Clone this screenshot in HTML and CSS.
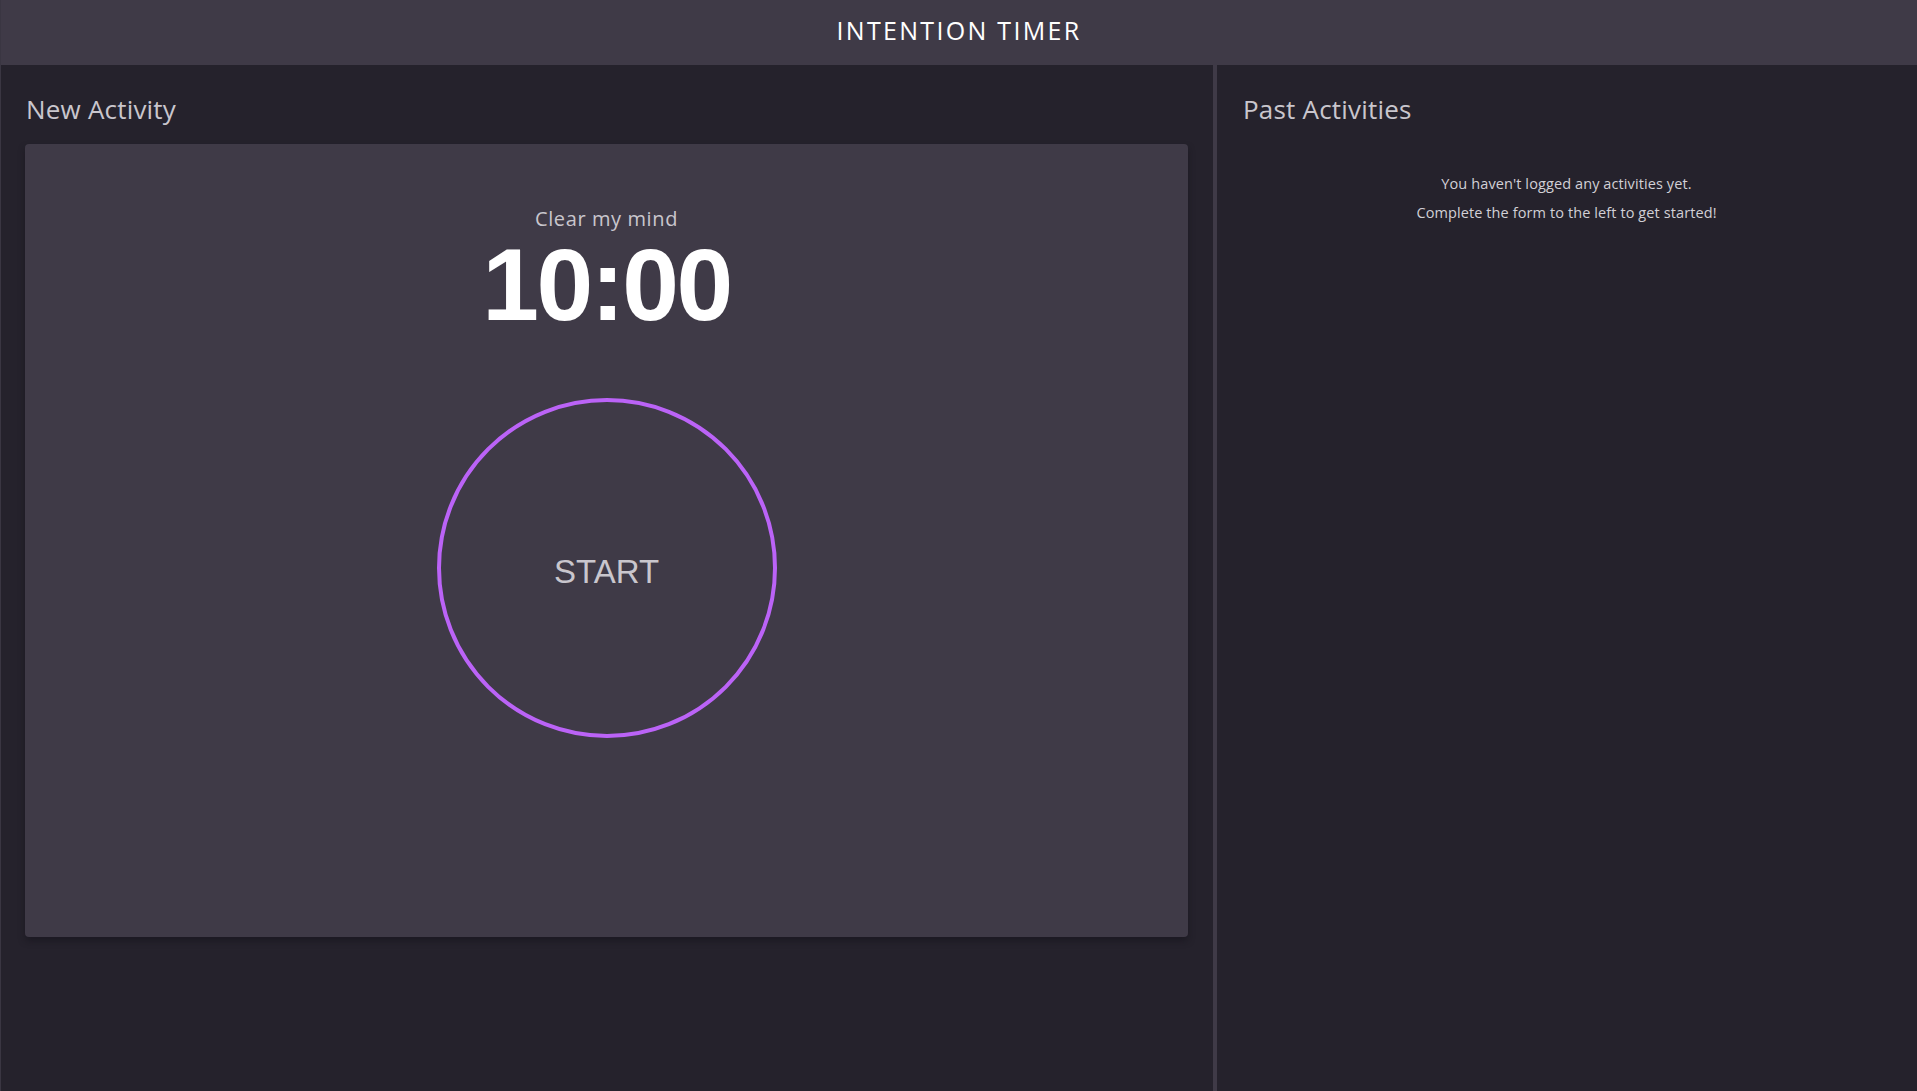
FILE: index.html
```html
<!DOCTYPE html>
<html lang="en">
<head>
<meta charset="utf-8">
<title>Intention Timer</title>
<link rel="stylesheet" href="styles.css">
</head>
<body>
<header class="top-bar">
  <h1 class="app-title">INTENTION TIMER</h1>
</header>
<main class="layout">
  <section class="panel panel-left">
    <h2 class="panel-title">New Activity</h2>
    <div class="card">
      <p class="activity-name">Clear my mind</p>
      <p class="countdown">10:00</p>
      <button class="start-btn" type="button">START</button>
    </div>
  </section>
  <section class="panel panel-right">
    <h2 class="panel-title">Past Activities</h2>
    <div class="empty">
      <p>You haven't logged any activities yet.</p>
      <p>Complete the form to the left to get started!</p>
    </div>
  </section>
</main>
</body>
</html>
```
FILE: styles.css
```css
* { box-sizing: border-box; }
html, body { margin: 0; padding: 0; height: 100%; }
body {
  background: #25222c;
  font-family: "Open Sans", "Noto Sans", sans-serif;
  color: #c9c6cd;
  display: flex;
  flex-direction: column;
  border-left: 1px solid #3a3642;
}
.top-bar {
  height: 65px;
  background: #3f3a47;
  display: flex;
  align-items: center;
  justify-content: center;
  flex-shrink: 0;
  padding-bottom: 5px;
}
.app-title {
  margin: 0;
  font-weight: 400;
  font-size: 25px;
  letter-spacing: 2.3px;
  color: #ffffff;
}
.layout {
  flex: 1;
  display: grid;
  grid-template-columns: 1216px 1fr;
}
.panel-left {
  border-right: 4px solid #3f3a47;
  padding: 24px 25px 0 24px;
}
.panel-right {
  padding: 24px 26px 0 25px;
}
.panel-title {
  margin: 0 0 0 1px;
  font-weight: 400;
  font-size: 26px;
  line-height: 40px;
  color: #c9c6cd;
  letter-spacing: 0.2px;
}
.card {
  margin-top: 15px;
  height: 793px;
  background: #3f3a47;
  border-radius: 4px;
  box-shadow: 0 4px 6px rgba(20, 18, 26, 0.5);
  display: flex;
  flex-direction: column;
  align-items: center;
  padding-top: 66px;
}
.activity-name {
  margin: 0;
  font-size: 20px;
  line-height: 18px;
  letter-spacing: 0.6px;
  color: #c9c6cd;
}
.countdown {
  margin: 0;
  font-family: "Liberation Sans", Arial, sans-serif;
  font-weight: 700;
  font-size: 102px;
  line-height: 114px;
  letter-spacing: -2.5px;
  color: #ffffff;
}
.start-btn {
  margin-top: 56px;
  width: 340px;
  height: 340px;
  border-radius: 50%;
  border: 4px solid #bb63f7;
  background: transparent;
  font-family: "Liberation Sans", Arial, sans-serif;
  font-size: 33px;
  color: #c9c6cd;
  padding: 8px 0 0 0;
  cursor: pointer;
}
.empty {
  margin-top: 40px;
  text-align: center;
  font-size: 14.5px;
  line-height: 29px;
  letter-spacing: 0.1px;
  color: #d2d0d6;
}
.empty p { margin: 0; }
```
